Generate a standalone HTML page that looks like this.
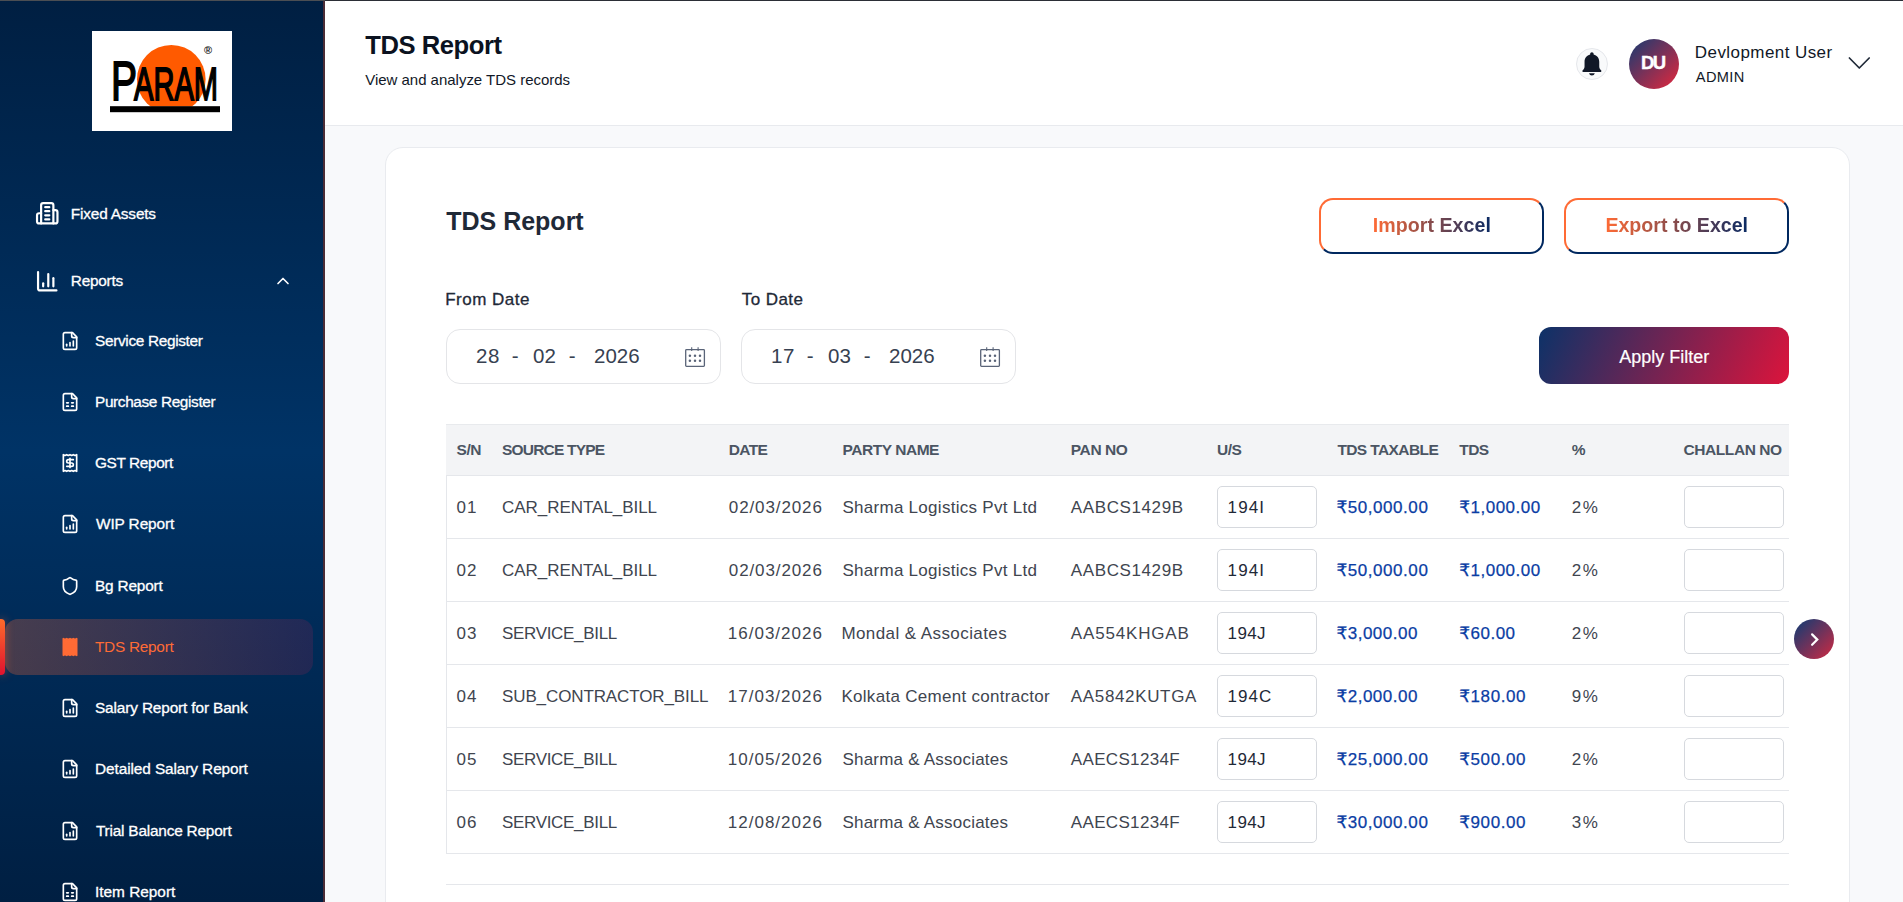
<!DOCTYPE html>
<html lang="en"><head><meta charset="utf-8"><title>TDS Report</title>
<style>
*{box-sizing:border-box;margin:0;padding:0}
html,body{width:1903px;height:902px;overflow:hidden}
body{position:relative;background:#f8f9fb;font-family:"Liberation Sans","DejaVu Sans",sans-serif;-webkit-font-smoothing:antialiased}
.t{position:absolute;white-space:nowrap;line-height:1}
.ic{position:absolute;display:block;overflow:visible}
.abs{position:absolute}
.sidebar{position:absolute;left:0;top:0;width:323px;height:902px;background:linear-gradient(180deg,#001f42 0%,#003366 50%,#001f42 100%)}
.sideborder{position:absolute;left:323px;top:0;width:2px;height:902px;background:#4a2c36}
.topline{position:absolute;left:0;top:0;height:1px}
.header{position:absolute;left:325px;top:0;width:1578px;height:126px;background:#fff;border-bottom:1px solid #e8eaee}
.card{position:absolute;left:385px;top:147px;width:1465px;height:800px;background:#fff;border:1px solid #e9ebef;border-radius:18px}
.active{position:absolute;left:5px;top:619px;width:308px;height:56px;border-radius:13px;background:linear-gradient(90deg,rgba(255,107,53,.28) 0%,rgba(200,30,80,.16) 100%)}
.activebar{position:absolute;left:0;top:619px;width:4.700px;height:56px;border-radius:0 4px 4px 0;background:linear-gradient(180deg,#ff6b2b,#e0132f);box-shadow:0 0 9px rgba(255,100,50,.55)}
.gbtn{position:absolute;height:56px;width:225px;border-radius:14px;border:2px solid;border-color:#ff6b35 #00285f #00285f #ff6b35;background:#fff}
.gtext{background:linear-gradient(90deg,#ff6b35,#0b2a63);-webkit-background-clip:text;background-clip:text;color:transparent!important}
.apply{position:absolute;left:1539px;top:327px;width:250px;height:57px;border-radius:12px;background:linear-gradient(115deg,#0c3268 0%,#dc143c 100%)}
.dinput{position:absolute;top:329px;width:275px;height:55px;border:1px solid #e4e5e8;border-radius:14px;background:#fff}
.thead{position:absolute;left:446px;top:424px;width:1343px;height:52px;background:#f3f4f6;border-top:1px solid #e8eaed;border-bottom:1px solid #e5e7eb}
.tline{position:absolute;left:446px;width:1343px;height:1px;background:#e5e7eb}
.cellin{position:absolute;width:100px;height:42px;border:1px solid #d6d9de;border-radius:5px;background:#fff}
</style></head><body>

<aside class="sidebar"></aside><div class="sideborder"></div>
<div class="abs" style="left:92px;top:31px;width:140px;height:100px;background:#fff;overflow:hidden">
<svg width="140" height="100" viewBox="0 0 140 100" style="display:block">
<circle cx="79.300" cy="48.300" r="34.300" fill="#ff5a00"/>
<rect x="0" y="75.500" width="140" height="30" fill="#fff"/>
<rect x="18" y="75.200" width="110" height="6" fill="#000"/>
<text x="19" y="68.800" font-family="Liberation Sans, sans-serif" font-size="55" fill="#000" stroke="#000" stroke-width="1.800" textLength="26" lengthAdjust="spacingAndGlyphs">P</text>
<text x="42" y="68.800" font-family="Liberation Sans, sans-serif" font-size="46" fill="#000" stroke="#000" stroke-width="1.800" textLength="84" lengthAdjust="spacingAndGlyphs">ARAM</text>
<text x="112" y="23" font-family="Liberation Sans, sans-serif" font-size="11" font-weight="700" fill="#222">®</text>
</svg></div>
<svg class="ic" style="left:35.25px;top:201.25px" width="24.5" height="24.5" viewBox="0 0 24 24" fill="none" stroke="#fff" stroke-width="2.15" stroke-linecap="round" stroke-linejoin="round"><path d="M6 22V4a2 2 0 0 1 2-2h8a2 2 0 0 1 2 2v18Z"/><path d="M6 12H4a2 2 0 0 0-2 2v6a2 2 0 0 0 2 2h2"/><path d="M18 9h2a2 2 0 0 1 2 2v9a2 2 0 0 1-2 2h-2"/><path d="M10 6h4"/><path d="M10 10h4"/><path d="M10 14h4"/><path d="M10 18h4"/></svg>
<span id="s_fixed" class="t" style="left:70.80px;top:206.36px;font-size:15.4px;font-weight:400;color:#fff;letter-spacing:-0.182px;-webkit-text-stroke:0.3px currentColor;">Fixed Assets</span>
<svg class="ic" style="left:35.25px;top:269.05px" width="24.5" height="24.5" viewBox="0 0 24 24" fill="none" stroke="#fff" stroke-width="2.15" stroke-linecap="round" stroke-linejoin="round"><path d="M3 3v16a2 2 0 0 0 2 2h16"/><path d="M18 17V9"/><path d="M13 17V5"/><path d="M8 17v-3"/></svg>
<span id="s_reports" class="t" style="left:70.80px;top:273.36px;font-size:15.4px;font-weight:400;color:#fff;letter-spacing:-0.250px;-webkit-text-stroke:0.3px currentColor;">Reports</span>
<svg class="ic" style="left:272.80px;top:270.80px" width="20" height="20" viewBox="0 0 24 24" fill="none" stroke="#fff" stroke-width="2" stroke-linecap="round" stroke-linejoin="round"><path d="m18 15-6-6-6 6"/></svg>
<div class="active"></div><div class="activebar"></div>
<svg class="ic" style="left:60.00px;top:331.00px" width="20" height="20" viewBox="0 0 24 24" fill="none" stroke="#fff" stroke-width="2" stroke-linecap="round" stroke-linejoin="round"><path d="M15 2H6a2 2 0 0 0-2 2v16a2 2 0 0 0 2 2h12a2 2 0 0 0 2-2V7Z"/><path d="M14 2v4a2 2 0 0 0 2 2h4"/><path d="M8 18v-2"/><path d="M12 18v-4"/><path d="M16 18v-6"/></svg>
<span id="s_sub0" class="t" style="left:95.00px;top:333.26px;font-size:15.4px;font-weight:400;color:#fff;letter-spacing:-0.333px;-webkit-text-stroke:0.3px currentColor;">Service Register</span>
<svg class="ic" style="left:60.00px;top:392.00px" width="20" height="20" viewBox="0 0 24 24" fill="none" stroke="#fff" stroke-width="2" stroke-linecap="round" stroke-linejoin="round"><path d="M15 2H6a2 2 0 0 0-2 2v16a2 2 0 0 0 2 2h12a2 2 0 0 0 2-2V7Z"/><path d="M14 2v4a2 2 0 0 0 2 2h4"/><path d="M8 13h2"/><path d="M14 13h2"/><path d="M8 17h2"/><path d="M14 17h2"/></svg>
<span id="s_sub1" class="t" style="left:95.00px;top:394.26px;font-size:15.4px;font-weight:400;color:#fff;letter-spacing:-0.375px;-webkit-text-stroke:0.3px currentColor;">Purchase Register</span>
<svg class="ic" style="left:60.00px;top:453.00px" width="20" height="20" viewBox="0 0 24 24" fill="none" stroke="#fff" stroke-width="2" stroke-linecap="round" stroke-linejoin="round"><path d="M4 2v20l2-1 2 1 2-1 2 1 2-1 2 1 2-1 2 1V2l-2 1-2-1-2 1-2-1-2 1-2-1-2 1Z"/><path d="M16 8h-6a2 2 0 1 0 0 4h4a2 2 0 1 1 0 4H8"/><path d="M12 17.5v-11"/></svg>
<span id="s_sub2" class="t" style="left:95.00px;top:455.26px;font-size:15.4px;font-weight:400;color:#fff;letter-spacing:-0.389px;-webkit-text-stroke:0.3px currentColor;">GST Report</span>
<svg class="ic" style="left:60.00px;top:514.00px" width="20" height="20" viewBox="0 0 24 24" fill="none" stroke="#fff" stroke-width="2" stroke-linecap="round" stroke-linejoin="round"><path d="M15 2H6a2 2 0 0 0-2 2v16a2 2 0 0 0 2 2h12a2 2 0 0 0 2-2V7Z"/><path d="M14 2v4a2 2 0 0 0 2 2h4"/><path d="M8 18v-2"/><path d="M12 18v-4"/><path d="M16 18v-6"/></svg>
<span id="s_sub3" class="t" style="left:96.00px;top:516.26px;font-size:15.4px;font-weight:400;color:#fff;letter-spacing:-0.111px;-webkit-text-stroke:0.3px currentColor;">WIP Report</span>
<svg class="ic" style="left:60.00px;top:576.00px" width="20" height="20" viewBox="0 0 24 24" fill="none" stroke="#fff" stroke-width="2" stroke-linecap="round" stroke-linejoin="round"><path d="M20 13c0 5-3.5 7.5-7.66 8.950a1 1 0 0 1-.67-.010C7.500 20.500 4 18 4 13V6a1 1 0 0 1 1-1c2 0 4.500-1.200 6.240-2.720a1.170 1.170 0 0 1 1.520 0C14.510 3.810 17 5 19 5a1 1 0 0 1 1 1z"/></svg>
<span id="s_sub4" class="t" style="left:95.00px;top:578.26px;font-size:15.4px;font-weight:400;color:#fff;letter-spacing:-0.187px;-webkit-text-stroke:0.3px currentColor;">Bg Report</span>
<svg class="ic" style="left:60.00px;top:637.00px" width="20" height="20" viewBox="0 0 24 24" fill="#ff6b35" stroke="#ff6b35" stroke-width="2" stroke-linecap="round" stroke-linejoin="round"><path d="M4 2v20l2-1 2 1 2-1 2 1 2-1 2 1 2-1 2 1V2l-2 1-2-1-2 1-2-1-2 1-2-1-2 1Z"/><path d="M16 8h-6a2 2 0 1 0 0 4h4a2 2 0 1 1 0 4H8"/><path d="M12 17.5v-11"/></svg>
<span id="s_sub5" class="t" style="left:95.00px;top:639.26px;font-size:15.4px;font-weight:400;color:#ff6b35;letter-spacing:-0.278px;">TDS Report</span>
<svg class="ic" style="left:60.00px;top:698.00px" width="20" height="20" viewBox="0 0 24 24" fill="none" stroke="#fff" stroke-width="2" stroke-linecap="round" stroke-linejoin="round"><path d="M15 2H6a2 2 0 0 0-2 2v16a2 2 0 0 0 2 2h12a2 2 0 0 0 2-2V7Z"/><path d="M14 2v4a2 2 0 0 0 2 2h4"/><path d="M8 18v-2"/><path d="M12 18v-4"/><path d="M16 18v-6"/></svg>
<span id="s_sub6" class="t" style="left:95.00px;top:700.26px;font-size:15.4px;font-weight:400;color:#fff;letter-spacing:-0.143px;-webkit-text-stroke:0.3px currentColor;">Salary Report for Bank</span>
<svg class="ic" style="left:60.00px;top:759.00px" width="20" height="20" viewBox="0 0 24 24" fill="none" stroke="#fff" stroke-width="2" stroke-linecap="round" stroke-linejoin="round"><path d="M15 2H6a2 2 0 0 0-2 2v16a2 2 0 0 0 2 2h12a2 2 0 0 0 2-2V7Z"/><path d="M14 2v4a2 2 0 0 0 2 2h4"/><path d="M8 18v-2"/><path d="M12 18v-4"/><path d="M16 18v-6"/></svg>
<span id="s_sub7" class="t" style="left:95.00px;top:761.26px;font-size:15.4px;font-weight:400;color:#fff;letter-spacing:-0.095px;-webkit-text-stroke:0.3px currentColor;">Detailed Salary Report</span>
<svg class="ic" style="left:60.00px;top:821.00px" width="20" height="20" viewBox="0 0 24 24" fill="none" stroke="#fff" stroke-width="2" stroke-linecap="round" stroke-linejoin="round"><path d="M15 2H6a2 2 0 0 0-2 2v16a2 2 0 0 0 2 2h12a2 2 0 0 0 2-2V7Z"/><path d="M14 2v4a2 2 0 0 0 2 2h4"/><path d="M8 18v-2"/><path d="M12 18v-4"/><path d="M16 18v-6"/></svg>
<span id="s_sub8" class="t" style="left:96.00px;top:823.26px;font-size:15.4px;font-weight:400;color:#fff;letter-spacing:-0.211px;-webkit-text-stroke:0.3px currentColor;">Trial Balance Report</span>
<svg class="ic" style="left:60.00px;top:882.00px" width="20" height="20" viewBox="0 0 24 24" fill="none" stroke="#fff" stroke-width="2" stroke-linecap="round" stroke-linejoin="round"><path d="M15 2H6a2 2 0 0 0-2 2v16a2 2 0 0 0 2 2h12a2 2 0 0 0 2-2V7Z"/><path d="M14 2v4a2 2 0 0 0 2 2h4"/><path d="M8 13h2"/><path d="M14 13h2"/><path d="M8 17h2"/><path d="M14 17h2"/></svg>
<span id="s_sub9" class="t" style="left:95.00px;top:884.26px;font-size:15.4px;font-weight:400;color:#fff;letter-spacing:-0.010px;-webkit-text-stroke:0.3px currentColor;">Item Report</span>
<header class="header"></header>
<span id="h_title" class="t" style="left:365.20px;top:32.93px;font-size:25.6px;font-weight:700;color:#0b1220;letter-spacing:-0.444px;">TDS Report</span>
<span id="h_sub" class="t" style="left:365.20px;top:72.40px;font-size:15px;font-weight:400;color:#111827;letter-spacing:-0.019px;">View and analyze TDS records</span>
<div class="abs" style="left:1576px;top:48px;width:32px;height:32px;border-radius:50%;background:#f9fafb;border:1px solid #e5e7eb"></div>
<svg class="ic" style="left:1580.300px;top:51.200px" width="23.800" height="26" viewBox="0 0 22 24"><path d="M11 1.200c-.9 0-1.600.7-1.600 1.600v.5C6.300 4 4.200 6.700 4.200 10v4.300c0 1.200-.5 2.300-1.300 3.100l-.4.4c-.6.600-.2 1.700.7 1.700h15.600c.9 0 1.300-1.100.7-1.700l-.4-.4c-.8-.8-1.300-1.900-1.300-3.100V10c0-3.300-2.100-6-5.200-6.700v-.5c0-.9-.7-1.600-1.600-1.600z" fill="#111827"/><path d="M8.300 20.600a2.800 2.800 0 0 0 5.400 0z" fill="#111827"/></svg>
<div class="abs" style="left:1629px;top:39px;width:50px;height:50px;border-radius:50%;background:linear-gradient(135deg,#1f3a70 5%,#c62a44 85%)"></div>
<span id="h_du" class="t" style="left:1641.00px;top:53.74px;font-size:18.5px;font-weight:700;color:#fff;letter-spacing:-1.500px;-webkit-text-stroke:0.400px currentColor;">DU</span>
<span id="h_user" class="t" style="left:1694.80px;top:43.81px;font-size:17px;font-weight:400;color:#111827;letter-spacing:0.429px;">Devlopment User</span>
<span id="h_admin" class="t" style="left:1695.80px;top:69.64px;font-size:14.6px;font-weight:400;color:#111827;letter-spacing:0.375px;">ADMIN</span>
<svg class="ic" style="left:1845px;top:52px" width="28" height="22" viewBox="0 0 28 22"><path d="M4.400 6 L14.300 16 L24.200 6" fill="none" stroke="#1f2937" stroke-width="1.700" stroke-linecap="round" stroke-linejoin="round"/></svg>
<section class="card"></section>
<span id="c_title" class="t" style="left:446.20px;top:208.54px;font-size:25px;font-weight:700;color:#1f2937;">TDS Report</span>
<div class="gbtn" style="left:1319px;top:198px"></div><div class="gbtn" style="left:1564px;top:198px"></div>
<span id="b_import" class="t" style="left:1372.80px;top:215.61px;font-size:19.6px;font-weight:700;color:#ff6b35;letter-spacing:0.045px;background:linear-gradient(90deg,#ff6b35 0%,#0a2a63 100%);-webkit-background-clip:text;background-clip:text;-webkit-text-fill-color:transparent;">Import Excel</span>
<span id="b_export" class="t" style="left:1605.40px;top:215.61px;font-size:19.6px;font-weight:700;color:#ff6b35;background:linear-gradient(90deg,#ff6b35 0%,#0a2a63 100%);-webkit-background-clip:text;background-clip:text;-webkit-text-fill-color:transparent;">Export to Excel</span>
<span id="l_from" class="t" style="left:445.20px;top:291.31px;font-size:17px;font-weight:400;color:#1f2937;letter-spacing:0.500px;-webkit-text-stroke:0.3px currentColor;">From Date</span>
<span id="l_to" class="t" style="left:741.80px;top:291.31px;font-size:17px;font-weight:400;color:#1f2937;letter-spacing:0.417px;-webkit-text-stroke:0.3px currentColor;">To Date</span>
<div class="dinput" style="left:446px"></div>
<span id="d0_d" class="t" style="left:476.00px;top:346.25px;font-size:20.5px;font-weight:400;color:#374151;letter-spacing:0.500px;">28</span>
<span id="d0_s1" class="t" style="left:511.80px;top:346.25px;font-size:20.5px;font-weight:400;color:#374151;">-</span>
<span id="d0_m" class="t" style="left:533.00px;top:346.25px;font-size:20.5px;font-weight:400;color:#374151;">02</span>
<span id="d0_s2" class="t" style="left:568.80px;top:346.25px;font-size:20.5px;font-weight:400;color:#374151;">-</span>
<span id="d0_y" class="t" style="left:594.00px;top:346.25px;font-size:20.5px;font-weight:400;color:#374151;">2026</span>
<svg class="ic" style="left:684px;top:345px" width="24" height="24" viewBox="0 0 24 24" fill="none" stroke="#5a6478" stroke-width="1.300" stroke-linejoin="round"><rect x="1.700" y="4.600" width="18.700" height="16.700" rx="0.800"/><path d="M7.700 2.300v3.600M14.100 2.300v3.600" stroke-width="1.100"/><g fill="#5a6478" stroke="none"><circle cx="5.900" cy="10.700" r="1.250"/><circle cx="11" cy="10.700" r="1.250"/><circle cx="16" cy="10.700" r="1.250"/><circle cx="5.900" cy="15.700" r="1.250"/><circle cx="11" cy="15.700" r="1.250"/><circle cx="16" cy="15.700" r="1.250"/></g></svg>
<div class="dinput" style="left:741px"></div>
<span id="d1_d" class="t" style="left:771.00px;top:346.25px;font-size:20.5px;font-weight:400;color:#374151;letter-spacing:0.500px;">17</span>
<span id="d1_s1" class="t" style="left:806.80px;top:346.25px;font-size:20.5px;font-weight:400;color:#374151;">-</span>
<span id="d1_m" class="t" style="left:828.00px;top:346.25px;font-size:20.5px;font-weight:400;color:#374151;">03</span>
<span id="d1_s2" class="t" style="left:863.80px;top:346.25px;font-size:20.5px;font-weight:400;color:#374151;">-</span>
<span id="d1_y" class="t" style="left:889.00px;top:346.25px;font-size:20.5px;font-weight:400;color:#374151;">2026</span>
<svg class="ic" style="left:979px;top:345px" width="24" height="24" viewBox="0 0 24 24" fill="none" stroke="#5a6478" stroke-width="1.300" stroke-linejoin="round"><rect x="1.700" y="4.600" width="18.700" height="16.700" rx="0.800"/><path d="M7.700 2.300v3.600M14.100 2.300v3.600" stroke-width="1.100"/><g fill="#5a6478" stroke="none"><circle cx="5.900" cy="10.700" r="1.250"/><circle cx="11" cy="10.700" r="1.250"/><circle cx="16" cy="10.700" r="1.250"/><circle cx="5.900" cy="15.700" r="1.250"/><circle cx="11" cy="15.700" r="1.250"/><circle cx="16" cy="15.700" r="1.250"/></g></svg>
<div class="apply"></div>
<span id="b_apply" class="t" style="left:1619.20px;top:347.96px;font-size:18px;font-weight:400;color:#fff;-webkit-text-stroke:0.2px currentColor;">Apply Filter</span>
<div class="thead"></div>
<span id="th0" class="t" style="left:456.60px;top:441.68px;font-size:15.5px;font-weight:700;color:#4b5563;letter-spacing:-0.500px;">S/N</span>
<span id="th1" class="t" style="left:502.00px;top:441.68px;font-size:15.5px;font-weight:700;color:#4b5563;letter-spacing:-0.800px;">SOURCE TYPE</span>
<span id="th2" class="t" style="left:728.80px;top:441.68px;font-size:15.5px;font-weight:700;color:#4b5563;letter-spacing:-0.667px;">DATE</span>
<span id="th3" class="t" style="left:842.40px;top:441.68px;font-size:15.5px;font-weight:700;color:#4b5563;letter-spacing:-0.444px;">PARTY NAME</span>
<span id="th4" class="t" style="left:1070.80px;top:441.68px;font-size:15.5px;font-weight:700;color:#4b5563;letter-spacing:-0.400px;">PAN NO</span>
<span id="th5" class="t" style="left:1217.00px;top:441.68px;font-size:15.5px;font-weight:700;color:#4b5563;letter-spacing:-0.500px;">U/S</span>
<span id="th6" class="t" style="left:1337.40px;top:441.68px;font-size:15.5px;font-weight:700;color:#4b5563;letter-spacing:-0.600px;">TDS TAXABLE</span>
<span id="th7" class="t" style="left:1459.20px;top:441.68px;font-size:15.5px;font-weight:700;color:#4b5563;letter-spacing:-0.500px;">TDS</span>
<span id="th8" class="t" style="left:1571.80px;top:441.68px;font-size:15.5px;font-weight:700;color:#4b5563;">%</span>
<span id="th9" class="t" style="left:1683.60px;top:441.68px;font-size:15.5px;font-weight:700;color:#4b5563;letter-spacing:-0.444px;">CHALLAN NO</span>
<div class="tline" style="top:538px"></div>
<div class="cellin" style="left:1217px;top:486px"></div><div class="cellin" style="left:1684px;top:486px"></div>
<span id="r0c0" class="t" style="left:456.60px;top:499.21px;font-size:17px;font-weight:400;color:#40454f;letter-spacing:1.000px;">01</span>
<span id="r0c1" class="t" style="left:502.00px;top:499.21px;font-size:17px;font-weight:400;color:#40454f;letter-spacing:-0.036px;">CAR_RENTAL_BILL</span>
<span id="r0c2" class="t" style="left:728.80px;top:499.21px;font-size:17px;font-weight:400;color:#40454f;letter-spacing:0.889px;">02/03/2026</span>
<span id="r0c3" class="t" style="left:842.40px;top:499.21px;font-size:17px;font-weight:400;color:#40454f;letter-spacing:0.283px;">Sharma Logistics Pvt Ltd</span>
<span id="r0c4" class="t" style="left:1070.80px;top:499.21px;font-size:17px;font-weight:400;color:#40454f;letter-spacing:0.611px;">AABCS1429B</span>
<span id="r0c5" class="t" style="left:1227.60px;top:499.21px;font-size:17px;font-weight:400;color:#1f2937;letter-spacing:1.133px;">194I</span>
<span id="r0c6" class="t" style="left:1336.40px;top:499.21px;font-size:17px;font-weight:400;color:#0a3da4;letter-spacing:0.556px;-webkit-text-stroke:0.250px currentColor;">₹50,000.00</span>
<span id="r0c7" class="t" style="left:1459.20px;top:499.21px;font-size:17px;font-weight:400;color:#0a3da4;letter-spacing:0.500px;-webkit-text-stroke:0.250px currentColor;">₹1,000.00</span>
<span id="r0c8" class="t" style="left:1571.80px;top:499.21px;font-size:17px;font-weight:400;color:#40454f;letter-spacing:1.500px;">2%</span>
<div class="tline" style="top:601px"></div>
<div class="cellin" style="left:1217px;top:549px"></div><div class="cellin" style="left:1684px;top:549px"></div>
<span id="r1c0" class="t" style="left:456.60px;top:562.21px;font-size:17px;font-weight:400;color:#40454f;letter-spacing:1.000px;">02</span>
<span id="r1c1" class="t" style="left:502.00px;top:562.21px;font-size:17px;font-weight:400;color:#40454f;letter-spacing:-0.036px;">CAR_RENTAL_BILL</span>
<span id="r1c2" class="t" style="left:728.80px;top:562.21px;font-size:17px;font-weight:400;color:#40454f;letter-spacing:0.889px;">02/03/2026</span>
<span id="r1c3" class="t" style="left:842.40px;top:562.21px;font-size:17px;font-weight:400;color:#40454f;letter-spacing:0.283px;">Sharma Logistics Pvt Ltd</span>
<span id="r1c4" class="t" style="left:1070.80px;top:562.21px;font-size:17px;font-weight:400;color:#40454f;letter-spacing:0.611px;">AABCS1429B</span>
<span id="r1c5" class="t" style="left:1227.60px;top:562.21px;font-size:17px;font-weight:400;color:#1f2937;letter-spacing:1.133px;">194I</span>
<span id="r1c6" class="t" style="left:1336.40px;top:562.21px;font-size:17px;font-weight:400;color:#0a3da4;letter-spacing:0.556px;-webkit-text-stroke:0.250px currentColor;">₹50,000.00</span>
<span id="r1c7" class="t" style="left:1459.20px;top:562.21px;font-size:17px;font-weight:400;color:#0a3da4;letter-spacing:0.500px;-webkit-text-stroke:0.250px currentColor;">₹1,000.00</span>
<span id="r1c8" class="t" style="left:1571.80px;top:562.21px;font-size:17px;font-weight:400;color:#40454f;letter-spacing:1.500px;">2%</span>
<div class="tline" style="top:664px"></div>
<div class="cellin" style="left:1217px;top:612px"></div><div class="cellin" style="left:1684px;top:612px"></div>
<span id="r2c0" class="t" style="left:456.60px;top:625.21px;font-size:17px;font-weight:400;color:#40454f;letter-spacing:1.000px;">03</span>
<span id="r2c1" class="t" style="left:502.00px;top:625.21px;font-size:17px;font-weight:400;color:#40454f;letter-spacing:-0.318px;">SERVICE_BILL</span>
<span id="r2c2" class="t" style="left:727.80px;top:625.21px;font-size:17px;font-weight:400;color:#40454f;letter-spacing:1.000px;">16/03/2026</span>
<span id="r2c3" class="t" style="left:841.40px;top:625.21px;font-size:17px;font-weight:400;color:#40454f;letter-spacing:0.417px;">Mondal &amp; Associates</span>
<span id="r2c4" class="t" style="left:1070.80px;top:625.21px;font-size:17px;font-weight:400;color:#40454f;letter-spacing:0.833px;">AA554KHGAB</span>
<span id="r2c5" class="t" style="left:1227.60px;top:625.21px;font-size:17px;font-weight:400;color:#1f2937;letter-spacing:0.333px;">194J</span>
<span id="r2c6" class="t" style="left:1336.40px;top:625.21px;font-size:17px;font-weight:400;color:#0a3da4;letter-spacing:0.500px;-webkit-text-stroke:0.250px currentColor;">₹3,000.00</span>
<span id="r2c7" class="t" style="left:1459.20px;top:625.21px;font-size:17px;font-weight:400;color:#0a3da4;letter-spacing:0.500px;-webkit-text-stroke:0.250px currentColor;">₹60.00</span>
<span id="r2c8" class="t" style="left:1571.80px;top:625.21px;font-size:17px;font-weight:400;color:#40454f;letter-spacing:1.500px;">2%</span>
<div class="tline" style="top:727px"></div>
<div class="cellin" style="left:1217px;top:675px"></div><div class="cellin" style="left:1684px;top:675px"></div>
<span id="r3c0" class="t" style="left:456.60px;top:688.21px;font-size:17px;font-weight:400;color:#40454f;letter-spacing:1.000px;">04</span>
<span id="r3c1" class="t" style="left:502.00px;top:688.21px;font-size:17px;font-weight:400;color:#40454f;letter-spacing:-0.111px;">SUB_CONTRACTOR_BILL</span>
<span id="r3c2" class="t" style="left:727.80px;top:688.21px;font-size:17px;font-weight:400;color:#40454f;letter-spacing:1.000px;">17/03/2026</span>
<span id="r3c3" class="t" style="left:841.40px;top:688.21px;font-size:17px;font-weight:400;color:#40454f;letter-spacing:0.292px;">Kolkata Cement contractor</span>
<span id="r3c4" class="t" style="left:1070.80px;top:688.21px;font-size:17px;font-weight:400;color:#40454f;letter-spacing:0.650px;">AA5842KUTGA</span>
<span id="r3c5" class="t" style="left:1227.60px;top:688.21px;font-size:17px;font-weight:400;color:#1f2937;letter-spacing:1.000px;">194C</span>
<span id="r3c6" class="t" style="left:1336.40px;top:688.21px;font-size:17px;font-weight:400;color:#0a3da4;letter-spacing:0.500px;-webkit-text-stroke:0.250px currentColor;">₹2,000.00</span>
<span id="r3c7" class="t" style="left:1459.20px;top:688.21px;font-size:17px;font-weight:400;color:#0a3da4;letter-spacing:0.583px;-webkit-text-stroke:0.250px currentColor;">₹180.00</span>
<span id="r3c8" class="t" style="left:1571.80px;top:688.21px;font-size:17px;font-weight:400;color:#40454f;letter-spacing:1.500px;">9%</span>
<div class="tline" style="top:790px"></div>
<div class="cellin" style="left:1217px;top:738px"></div><div class="cellin" style="left:1684px;top:738px"></div>
<span id="r4c0" class="t" style="left:456.60px;top:751.21px;font-size:17px;font-weight:400;color:#40454f;letter-spacing:1.000px;">05</span>
<span id="r4c1" class="t" style="left:502.00px;top:751.21px;font-size:17px;font-weight:400;color:#40454f;letter-spacing:-0.318px;">SERVICE_BILL</span>
<span id="r4c2" class="t" style="left:727.80px;top:751.21px;font-size:17px;font-weight:400;color:#40454f;letter-spacing:1.000px;">10/05/2026</span>
<span id="r4c3" class="t" style="left:842.40px;top:751.21px;font-size:17px;font-weight:400;color:#40454f;letter-spacing:0.222px;">Sharma &amp; Associates</span>
<span id="r4c4" class="t" style="left:1070.80px;top:751.21px;font-size:17px;font-weight:400;color:#40454f;letter-spacing:0.333px;">AAECS1234F</span>
<span id="r4c5" class="t" style="left:1227.60px;top:751.21px;font-size:17px;font-weight:400;color:#1f2937;letter-spacing:0.333px;">194J</span>
<span id="r4c6" class="t" style="left:1336.40px;top:751.21px;font-size:17px;font-weight:400;color:#0a3da4;letter-spacing:0.556px;-webkit-text-stroke:0.250px currentColor;">₹25,000.00</span>
<span id="r4c7" class="t" style="left:1459.20px;top:751.21px;font-size:17px;font-weight:400;color:#0a3da4;letter-spacing:0.583px;-webkit-text-stroke:0.250px currentColor;">₹500.00</span>
<span id="r4c8" class="t" style="left:1571.80px;top:751.21px;font-size:17px;font-weight:400;color:#40454f;letter-spacing:1.500px;">2%</span>
<div class="tline" style="top:853px"></div>
<div class="cellin" style="left:1217px;top:801px"></div><div class="cellin" style="left:1684px;top:801px"></div>
<span id="r5c0" class="t" style="left:456.60px;top:814.21px;font-size:17px;font-weight:400;color:#40454f;letter-spacing:1.000px;">06</span>
<span id="r5c1" class="t" style="left:502.00px;top:814.21px;font-size:17px;font-weight:400;color:#40454f;letter-spacing:-0.318px;">SERVICE_BILL</span>
<span id="r5c2" class="t" style="left:727.80px;top:814.21px;font-size:17px;font-weight:400;color:#40454f;letter-spacing:1.000px;">12/08/2026</span>
<span id="r5c3" class="t" style="left:842.40px;top:814.21px;font-size:17px;font-weight:400;color:#40454f;letter-spacing:0.222px;">Sharma &amp; Associates</span>
<span id="r5c4" class="t" style="left:1070.80px;top:814.21px;font-size:17px;font-weight:400;color:#40454f;letter-spacing:0.333px;">AAECS1234F</span>
<span id="r5c5" class="t" style="left:1227.60px;top:814.21px;font-size:17px;font-weight:400;color:#1f2937;letter-spacing:0.333px;">194J</span>
<span id="r5c6" class="t" style="left:1336.40px;top:814.21px;font-size:17px;font-weight:400;color:#0a3da4;letter-spacing:0.556px;-webkit-text-stroke:0.250px currentColor;">₹30,000.00</span>
<span id="r5c7" class="t" style="left:1459.20px;top:814.21px;font-size:17px;font-weight:400;color:#0a3da4;letter-spacing:0.583px;-webkit-text-stroke:0.250px currentColor;">₹900.00</span>
<span id="r5c8" class="t" style="left:1571.80px;top:814.21px;font-size:17px;font-weight:400;color:#40454f;letter-spacing:1.500px;">3%</span>
<div class="abs" style="left:446px;top:475px;width:1px;height:379px;background:#e5e7eb"></div>
<div class="tline" style="top:884px"></div>
<div class="abs" style="left:1794px;top:619px;width:40px;height:40px;border-radius:50%;background:linear-gradient(135deg,#1f3a70 10%,#c62a44 95%)"></div>
<svg class="ic" style="left:1804px;top:629px" width="20" height="20" viewBox="0 0 20 20"><path d="M8.100 5.400 L13.300 10.600 L8.100 15.800" fill="none" stroke="#fff" stroke-width="2.200" stroke-linecap="round" stroke-linejoin="miter"/></svg>
<div class="topline" style="width:325px;background:#4b4e53"></div><div class="topline" style="left:325px;width:1578px;background:#2b2e36"></div>
</body></html>
